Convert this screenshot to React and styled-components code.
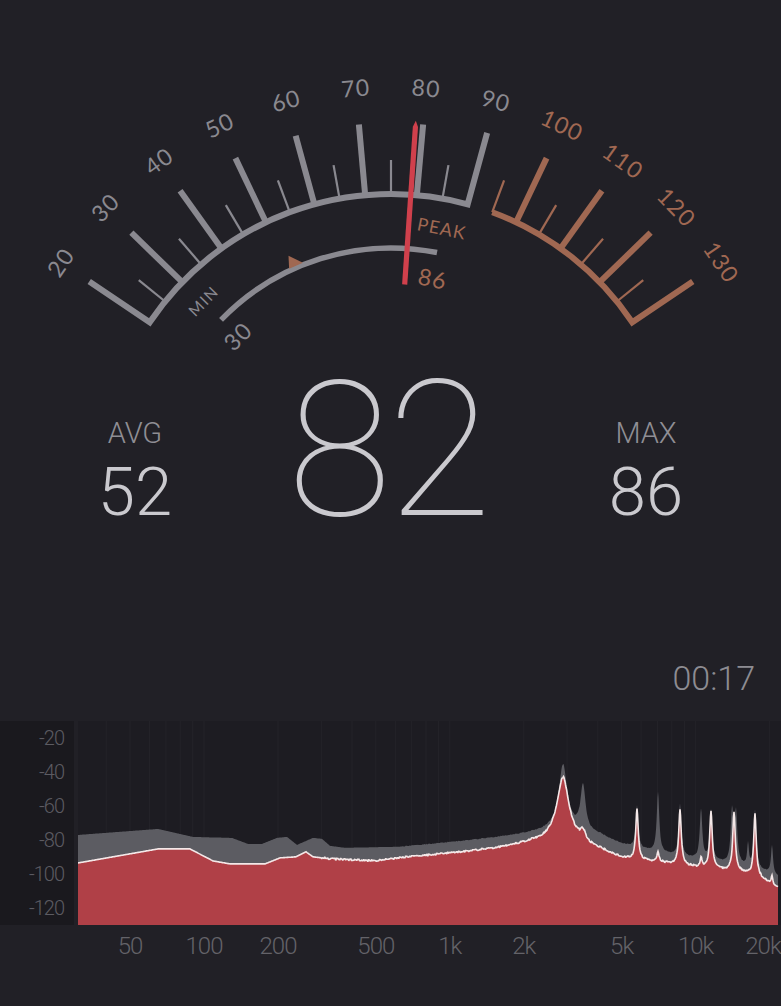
import React from "react";
import styled, { createGlobalStyle } from "styled-components";

const GlobalStyle = createGlobalStyle`
  html, body {
    margin: 0;
    padding: 0;
    background: #212026;
  }
  body {
    font-family: Roboto, "Liberation Sans", sans-serif;
  }
`;

const Screen = styled.div`
  width: 781px;
  height: 1006px;
  overflow: hidden;
  background: #212026;
  display: flex;
  flex-direction: column;
`;

const GaugeSvg = styled.svg`
  display: block;
  width: 781px;
  height: 355px;
  flex: none;
`;

const GaugeText = styled.text`
  font-family: Lato, "Open Sans", sans-serif;
  font-size: ${(p) => p.size || 23}px;
  letter-spacing: ${(p) => p.spacing || 1.2}px;
  fill: ${(p) => p.color};
`;

const Readout = styled.div`
  display: grid;
  grid-template-columns: 270px 1fr 270px;
  align-items: last baseline;
  flex: none;
`;

const Stat = styled.div`
  display: flex;
  flex-direction: column;
  align-items: center;
`;

const StatLabel = styled.div`
  font-size: 29px;
  line-height: 29px;
  font-weight: 300;
  color: #8f8e94;
  margin-bottom: 11px;
`;

const StatValue = styled.div`
  font-size: 67px;
  line-height: 67px;
  font-weight: 300;
  color: #cac9ce;
`;

const BigValue = styled.div`
  font-size: 190px;
  line-height: 190px;
  font-weight: 100;
  color: #cac9ce;
  text-align: center;
  letter-spacing: -4px;
  padding-right: 6px;
`;

const TimerRow = styled.div`
  height: 176px;
  box-sizing: border-box;
  display: flex;
  justify-content: flex-end;
  align-items: flex-end;
  padding: 0 26px 26px 0;
  flex: none;
`;

const Timer = styled.div`
  font-size: 34px;
  line-height: 34px;
  font-weight: 300;
  color: #8d8c92;
`;

const ChartRow = styled.div`
  display: flex;
  align-items: flex-start;
  gap: 4px;
  flex: none;
`;

const YAxis = styled.div`
  width: 74px;
  height: 204px;
  background: #1a191e;
  display: flex;
  flex-direction: column;
`;

const YLabel = styled.div`
  height: 34px;
  line-height: 34px;
  text-align: right;
  padding-right: 10px;
  font-size: 20px;
  font-weight: 300;
  letter-spacing: -1px;
  color: #5c5b62;
`;

const PlotSvg = styled.svg`
  display: block;
  width: 703px;
  height: 260px;
`;

const AxisText = styled.text`
  font-family: Roboto, "Liberation Sans", sans-serif;
  font-size: 24px;
  font-weight: 300;
  letter-spacing: -1px;
  fill: #646369;
`;

// gauge geometry
const CX = 391;
const CY = 485;
const R = 291;
const GREY = "#8a8990";
const COPPER = "#a06852";
const NEEDLE = "#d0404c";

const angleOf = (v) => -56 + (v - 20) * (112 / 110);
const pt = (r, a, off = 0) => {
  const t = (a * Math.PI) / 180;
  return [CX + r * Math.sin(t) + off * Math.cos(t), CY - r * Math.cos(t) + off * Math.sin(t)];
};
const xy = (p) => `${p[0].toFixed(2)},${p[1].toFixed(2)}`;

const arc = (r, a1, a2) => `M${xy(pt(r, a1))} A${r} ${r} 0 0 1 ${xy(pt(r, a2))}`;

const Gauge = () => {
  const ticks = [];
  for (let v = 25; v <= 125; v += 5) {
    if (v === 90) continue;
    const major = v % 10 === 0;
    const a = angleOf(v);
    const [x1, y1] = pt(R, a);
    const [x2, y2] = pt(R + (major ? 71 : 34), a);
    ticks.push(
      <line
        key={v}
        x1={x1}
        y1={y1}
        x2={x2}
        y2={y2}
        stroke={v < 90 ? GREY : COPPER}
        strokeWidth={major ? 6 : 2.2}
      />
    );
  }

  const labels = [];
  for (let v = 20; v <= 130; v += 10) {
    const a = angleOf(v);
    const [x, y] = pt(399, a);
    labels.push(
      <GaugeText
        key={v}
        x={x}
        y={y}
        color={v <= 90 ? GREY : COPPER}
        textAnchor="middle"
        dominantBaseline="central"
        transform={`rotate(${a} ${x} ${y})`}
      >
        {v}
      </GaugeText>
    );
  }

  const a20 = angleOf(20);
  const a90 = angleOf(90);
  const a95 = angleOf(95);
  const a130 = angleOf(130);
  const avgA = angleOf(52);
  const needleA = 3.9;

  const label = (text, r, a, color, size, spacing) => {
    const [x, y] = pt(r, a);
    return (
      <GaugeText
        x={x}
        y={y}
        size={size}
        spacing={spacing}
        color={color}
        textAnchor="middle"
        dominantBaseline="central"
        transform={`rotate(${a} ${x} ${y})`}
      >
        {text}
      </GaugeText>
    );
  };

  return (
    <GaugeSvg viewBox="0 0 781 355">
      <path
        d={`M${xy(pt(R + 73, a20))} L${xy(pt(R, a20))} ${arc(R, a20, a90).replace(/^M[^A]+/, "")} L${xy(pt(R + 74, a90))}`}
        fill="none"
        stroke={GREY}
        strokeWidth="6"
        strokeLinejoin="miter"
      />
      <path
        d={`${arc(R, a95, a130)} L${xy(pt(R + 73, a130))}`}
        fill="none"
        stroke={COPPER}
        strokeWidth="6"
        strokeLinejoin="miter"
      />
      {ticks}
      {labels}
      <path d={arc(237, angleOf(30), 11.2)} fill="none" stroke={GREY} strokeWidth="5.5" />
      <polygon
        points={[pt(239, avgA, -7.5), pt(239, avgA, 7.5), pt(251, avgA, -3)].map(xy).join(" ")}
        fill={COPPER}
      />
      {label("MIN", 263, angleOf(30.3), GREY, 15.5, 1.5)}
      {label("PEAK", 262, 11.2, COPPER, 18, 1)}
      {label("30", 214, angleOf(30), GREY, 23, 1.2)}
      {label("86", 211, 11.4, COPPER, 23, 1.2)}
      <polygon
        points={[
          pt(201, needleA, -2.6),
          pt(359, needleA, -2.6),
          pt(365, needleA, 0),
          pt(359, needleA, 2.6),
          pt(201, needleA, 2.6),
        ]
          .map(xy)
          .join(" ")}
        fill={NEEDLE}
      />
    </GaugeSvg>
  );
};

// spectrum, in page pixel coordinates, shifted into the plot
const PX0 = 78;
const PY0 = 721;
const freqX = (f) => 204 + 74 * Math.log2(f / 100) - PX0;

const interp = (pts, x) => {
  for (let i = 0; i < pts.length - 1; i++) {
    const [x1, y1] = pts[i];
    const [x2, y2] = pts[i + 1];
    if (x >= x1 && x <= x2) return y1 + ((y2 - y1) * (x - x1)) / (x2 - x1);
  }
  return pts[pts.length - 1][1];
};

const noise = (x) => {
  const s = Math.sin(x * 12.9898 + 1.3) * 43758.5453;
  return s - Math.floor(s) - 0.5;
};

const buildCurve = (base, peaks, amp, from) => {
  const out = [];
  for (let x = 78; x <= 778; x += 0.5) {
    let y = interp(base, x);
    for (const p of peaks) y -= p.h / (1 + ((x - p.x) / p.w) ** 2);
    if (x > from) y += amp * noise(Math.round(x));
    out.push([x - PX0, y - PY0]);
  }
  return out;
};

const redBase = [
  [78, 863], [158, 849], [190, 849], [213, 861], [230, 864], [265, 864], [280, 858],
  [296, 857], [306, 852], [313, 857], [330, 859], [375, 861], [400, 858], [490, 850],
  [530, 846], [600, 853], [623, 860], [660, 863], [700, 868], [740, 872], [760, 878],
  [778, 888],
];
const redPeaks = [
  { x: 563, h: 12, w: 25 },
  { x: 563, h: 60, w: 7 },
  { x: 583, h: 10, w: 3 },
  { x: 637, h: 50, w: 1.5 },
  { x: 658, h: 10, w: 1.2 },
  { x: 680, h: 55, w: 1.5 },
  { x: 701, h: 10, w: 1 },
  { x: 711, h: 58, w: 1.5 },
  { x: 734, h: 58, w: 1.5 },
  { x: 755, h: 62, w: 1.5 },
  { x: 772, h: 8, w: 1 },
];
const greyBase = [
  [78, 835], [158, 829], [193, 837], [232, 838], [248, 844], [262, 844], [277, 838],
  [287, 837], [297, 845], [313, 838], [322, 839], [330, 846], [345, 848], [400, 847],
  [500, 838], [530, 836], [600, 838], [623, 846], [640, 850], [700, 860], [740, 865],
  [770, 873], [778, 877],
];
const greyPeaks = [
  { x: 563, h: 10, w: 25 },
  { x: 563, h: 62, w: 5 },
  { x: 583, h: 45, w: 3 },
  { x: 637, h: 42, w: 1.5 },
  { x: 658, h: 60, w: 1.5 },
  { x: 680, h: 52, w: 1.5 },
  { x: 701, h: 50, w: 1.5 },
  { x: 711, h: 51, w: 1.5 },
  { x: 732, h: 52, w: 1.5 },
  { x: 736, h: 50, w: 1.5 },
  { x: 748, h: 22, w: 1 },
  { x: 755, h: 58, w: 1.5 },
  { x: 772, h: 28, w: 1.2 },
];

const toLine = (pts) => pts.map((p) => `${p[0].toFixed(1)},${p[1].toFixed(1)}`).join(" L");
const toArea = (pts) => `M0,204 L${toLine(pts)} L700,204 Z`;

const gridFreqs = [
  40, 50, 60, 70, 80, 90, 100, 200, 300, 400, 500, 600, 700, 800, 900, 1000, 2000, 3000,
  4000, 5000, 6000, 7000, 8000, 9000, 10000, 20000,
];

const freqLabels = [
  ["50", 50], ["100", 100], ["200", 200], ["500", 500], ["1k", 1000], ["2k", 2000],
  ["5k", 5000], ["10k", 10000], ["20k", 20000],
];

const Spectrum = () => {
  const red = buildCurve(redBase, redPeaks, 1.6, 320);
  const grey = buildCurve(greyBase, greyPeaks, 0.8, 400);
  return (
    <PlotSvg viewBox="0 0 703 260">
      <rect x="0" y="0" width="703" height="204" fill="#1d1c22" />
      {gridFreqs.map((f) => (
        <line
          key={f}
          x1={freqX(f)}
          x2={freqX(f)}
          y1="0"
          y2="204"
          stroke="rgba(255,255,255,0.03)"
          strokeWidth="1"
        />
      ))}
      <path d={toArea(grey)} fill="#5c5c62" />
      <path d={toArea(red)} fill="#b04047" />
      <path d={`M${toLine(red)}`} fill="none" stroke="#f4e8e8" strokeWidth="1.6" />
      {freqLabels.map(([t, f]) => (
        <AxisText
          key={t}
          x={Math.min(freqX(f), 685)}
          y="225"
          textAnchor="middle"
          dominantBaseline="central"
        >
          {t}
        </AxisText>
      ))}
    </PlotSvg>
  );
};

const App = () => {
  return (
    <Screen>
      <GlobalStyle />
      <Gauge />
      <Readout>
        <Stat>
          <StatLabel>AVG</StatLabel>
          <StatValue>52</StatValue>
        </Stat>
        <BigValue>82</BigValue>
        <Stat>
          <StatLabel>MAX</StatLabel>
          <StatValue>86</StatValue>
        </Stat>
      </Readout>
      <TimerRow>
        <Timer>00:17</Timer>
      </TimerRow>
      <ChartRow>
        <YAxis>
          {["-20", "-40", "-60", "-80", "-100", "-120"].map((v) => (
            <YLabel key={v}>{v}</YLabel>
          ))}
        </YAxis>
        <Spectrum />
      </ChartRow>
    </Screen>
  );
};

export default App;
